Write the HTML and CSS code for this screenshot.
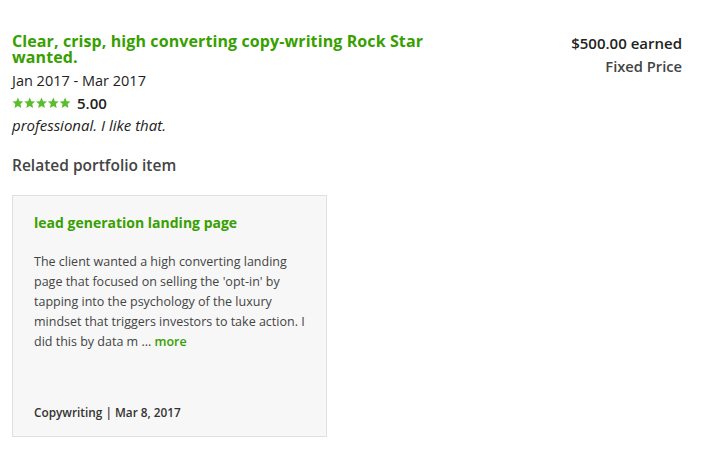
FILE: index.html
```html
<!DOCTYPE html>
<html>
<head>
<meta charset="utf-8">
<link rel="stylesheet" href="styles.css">
</head>
<body>
<div class="page">
  <div class="job">
    <div class="job-main">
      <h3 class="job-title">Clear, crisp, high converting copy-writing Rock Star wanted.</h3>
      <div class="dates">Jan 2017 - Mar 2017</div>
      <div class="rating">
        <span class="stars">
          <svg viewBox="0 0 60 12" width="59" height="12">
            <g fill="#5bbd2b">
              <path id="s" d="M6 0.5l1.6 3.6 3.9.4-2.9 2.6.8 3.9L6 9l-3.4 2 .8-3.9L.5 4.5l3.9-.4z"/>
              <use href="#s" x="12"/>
              <use href="#s" x="24"/>
              <use href="#s" x="36"/>
              <use href="#s" x="48"/>
            </g>
          </svg>
        </span>
        <span class="score">5.00</span>
      </div>
      <div class="feedback">professional. I like that.</div>
    </div>
    <div class="job-side">
      <div class="earned">$500.00 earned</div>
      <div class="type">Fixed Price</div>
    </div>
  </div>
  <h4 class="related">Related portfolio item</h4>
  <div class="card">
    <div class="card-title">lead generation landing page</div>
    <p class="card-body">The client wanted a high converting landing page that focused on selling the 'opt-in' by tapping into the psychology of the luxury mindset that triggers investors to take action. I did this by data m ... <span class="more">more</span></p>
    <div class="card-foot">Copywriting | Mar 8, 2017</div>
  </div>
</div>
</body>
</html>
```
FILE: styles.css
```css
html, body { margin: 0; padding: 0; background: #fff; }
body { font-family: "Open Sans", "Liberation Sans", sans-serif; color: #222; }
.page { padding: 33px 20px 0 12px; }
.job { display: flex; justify-content: space-between; }
.job-main { width: 440px; }
.job-title { margin: 0; font-size: 16px; line-height: 16px; font-weight: 700; color: #37a000; letter-spacing: 0.1px; }
.dates { font-size: 14.5px; line-height: 20px; margin-top: 6px; color: #222; }
.rating { display: flex; align-items: center; margin-top: 2px; height: 20px; }
.stars { display: flex; margin-right: 6px; }
.score { font-size: 15px; font-weight: 600; color: #222; }
.feedback { font-style: italic; font-size: 15px; line-height: 20px; margin-top: 2px; color: #222; }
.job-side { text-align: right; padding-top: 0; }
.earned { font-size: 15px; font-weight: 600; line-height: 20px; color: #222; }
.type { font-size: 14.7px; font-weight: 600; line-height: 20px; margin-top: 3px; color: #444; }
.related { margin: 20px 0 0; font-size: 15.5px; font-weight: 600; line-height: 20px; color: #444; }
.card { margin-top: 20px; width: 271px; height: 205px; border: 1px solid #e0e0e0; background: #f7f7f7; padding: 19px 21px 16px 21px; display: flex; flex-direction: column; }
.card-title { font-size: 14px; font-weight: 700; color: #37a000; line-height: 16px; }
.card-body { margin: 21px 0 0; font-size: 12.5px; line-height: 20px; color: #444; letter-spacing: 0; }
.more { color: #37a000; font-weight: 600; }
.card-foot { margin-top: auto; font-size: 11.8px; font-weight: 600; color: #333; line-height: 16px; }
```
